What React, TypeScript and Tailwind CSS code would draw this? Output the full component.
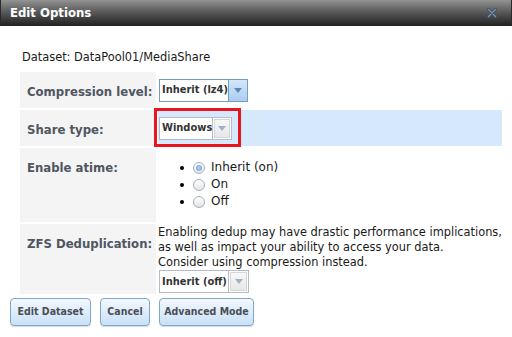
import React from "react";

const Select = ({
  label,
  width,
  active = false,
}: {
  label: string;
  width: string;
  active?: boolean;
}) => {
  return (
    <div
      className={`flex h-[23px] border bg-white ${width} ${
        active ? "border-[#769dc0]" : "border-[#b5bcc7]"
      }`}
    >
      <div className="flex flex-1 items-center pl-[2px] font-['DejaVu_Sans_Condensed','DejaVu_Sans',sans-serif] text-[11px] font-bold text-[#333]">
        {label}
      </div>
      {active ? (
        <div className="flex w-[19px] items-center justify-center border-l border-[#769dc0] bg-linear-to-b from-[#d4e7fb] to-[#abcdf0]">
          <svg width="8" height="5" viewBox="0 0 8 5">
            <path d="M0 0 H8 L4 5 Z" fill="#5f87b8" />
          </svg>
        </div>
      ) : (
        <div className="flex w-[20px] items-center justify-center border-l border-[#b5bcc7] p-[1px]">
          <div className="flex h-full w-full items-center justify-center border border-[#d3d6db] bg-linear-to-b from-[#f7f7f7] to-[#e8e8e8]">
            <svg width="8" height="5" viewBox="0 0 8 5">
              <path d="M0 0 H8 L4 5 Z" fill="#9fb1c8" />
            </svg>
          </div>
        </div>
      )}
    </div>
  );
};

const Radio = ({ checked, label }: { checked?: boolean; label: string }) => (
  <div className="flex h-[17px] items-center">
    <span className="ml-[22px] h-[4px] w-[4px] rounded-full bg-black" />
    <span className="ml-[9px] flex h-[12px] w-[12px] items-center justify-center rounded-full border border-[#a8b0ba] bg-linear-to-b from-[#ffffff] to-[#e2e5e9]">
      {checked && (
        <span className="h-[6px] w-[6px] rounded-full bg-radial from-[#b7d3f0] to-[#6d9cd0]" />
      )}
    </span>
    <span className="ml-[6px] text-[12px] leading-[17px] text-[#1a1a1a]">
      {label}
    </span>
  </div>
);

const Label = ({ text }: { text: string }) => (
  <div className="bg-[#f4f4f4] pl-[7px] pt-[12px] font-['DejaVu_Sans_Condensed','DejaVu_Sans',sans-serif] text-[13px] font-bold leading-[15px] text-[#4f5661]">
    {text}
  </div>
);

const Button = ({ text, width }: { text: string; width: string }) => (
  <button
    type="button"
    className={`h-[28px] ${width} rounded-[4px] border border-[#7fa7cb] bg-linear-to-b from-[#f3f8fe] to-[#c9e0f7] font-['DejaVu_Sans_Condensed','DejaVu_Sans',sans-serif] text-[10.5px] font-bold text-[#4a4f57] shadow-[0_1px_1px_rgba(0,0,0,0.15)]`}
  >
    {text}
  </button>
);

export default function App() {
  return (
    <div className="relative h-[337px] w-[512px] overflow-hidden bg-white font-['DejaVu_Sans',sans-serif]">
      <div className="flex h-[26px] items-center justify-between border-x border-[#2a2a2a] bg-linear-to-b from-[#939393] via-[#555555] to-[#222222] pl-[9px] pr-[14px]">
        <span className="font-['DejaVu_Sans_Condensed','DejaVu_Sans',sans-serif] text-[13px] font-bold text-white">
          Edit Options
        </span>
        <svg width="10" height="10" viewBox="0 0 10 10" className="mt-[-1px]">
          <path
            d="M1.5 1.5 L8.5 8.5 M8.5 1.5 L1.5 8.5"
            stroke="#3f546c"
            strokeWidth="3"
            strokeLinecap="round"
          />
          <path
            d="M1.5 1.5 L8.5 8.5 M8.5 1.5 L1.5 8.5"
            stroke="#7d91a8"
            strokeWidth="1.2"
            strokeLinecap="round"
          />
        </svg>
      </div>

      <div className="mt-[24px] h-[14px] pl-[22px] text-[11.4px] leading-[14px] text-[#1a1a1a]">
        Dataset: DataPool01/MediaShare
      </div>

      <div className="ml-[20px] mt-[8px] grid w-[482px] grid-cols-[136px_344px] grid-rows-[36px_36px_74px_70px] gap-[2px]">
        <Label text="Compression level:" />
        <div className="pl-[1px] pt-[7px]">
          <Select label="Inherit (lz4)" width="w-[89px]" active />
        </div>

        <Label text="Share type:" />
        <div className="bg-[#d5e8fc] pl-[1px] pt-[7px]">
          <Select label="Windows" width="w-[73px]" />
        </div>

        <Label text="Enable atime:" />
        <div className="pt-[11px]">
          <Radio checked label="Inherit (on)" />
          <Radio label="On" />
          <Radio label="Off" />
        </div>

        <Label text="ZFS Deduplication:" />
        <div className="pt-[1px] text-[11.4px] leading-[15px] text-[#1a1a1a]">
          <div className="whitespace-nowrap">
            Enabling dedup may have drastic performance implications,
          </div>
          <div className="whitespace-nowrap">
            as well as impact your ability to access your data.
          </div>
          <div className="whitespace-nowrap">
            Consider using compression instead.
          </div>
          <div className="pl-[1px]">
            <Select label="Inherit (off)" width="w-[90px]" />
          </div>
        </div>
      </div>

      <div className="ml-[10px] mt-[4px] flex gap-[9px]">
        <Button text="Edit Dataset" width="w-[81px]" />
        <Button text="Cancel" width="w-[50px]" />
        <Button text="Advanced Mode" width="w-[95px]" />
      </div>

      <div className="pointer-events-none absolute left-[154px] top-[108px] h-[39px] w-[87px] border-[3px] border-[#e8151e]" />
    </div>
  );
}
